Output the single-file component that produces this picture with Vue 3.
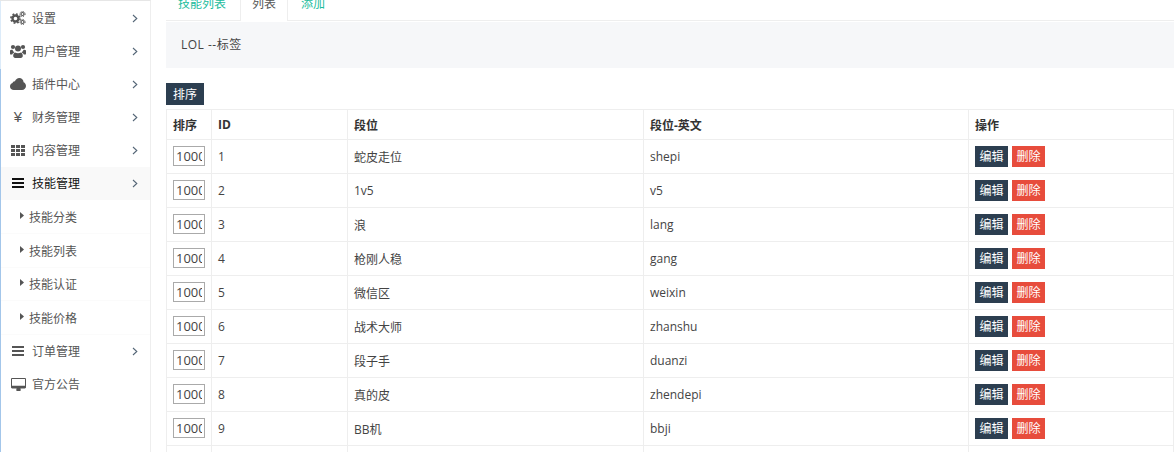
<script setup>
const menu = [
  { label: '设置', icon: 'cogs', arrow: true },
  { label: '用户管理', icon: 'users', arrow: true },
  { label: '插件中心', icon: 'cloud', arrow: true },
  { label: '财务管理', icon: 'yen', arrow: true },
  { label: '内容管理', icon: 'th', arrow: true },
  { label: '技能管理', icon: 'bars', arrow: true, active: true },
]
const subs = ['技能分类', '技能列表', '技能认证', '技能价格']
const rows = [
  [1, '蛇皮走位', 'shepi'], [2, '1v5', 'v5'], [3, '浪', 'lang'],
  [4, '枪刚人稳', 'gang'], [5, '微信区', 'weixin'], [6, '战术大师', 'zhanshu'],
  [7, '段子手', 'duanzi'], [8, '真的皮', 'zhendepi'], [9, 'BB机', 'bbji'],
]
</script>

<template>
  <div class="page">
    <aside class="side">
      <div v-for="m in menu" :key="m.label" class="item" :class="{ active: m.active }">
        <span class="ico">
          <svg v-if="m.icon === 'cogs'" width="16" height="14" viewBox="0 0 16 14"><g fill="none" stroke="currentColor"><circle cx="5.500" cy="7.500" r="3" stroke-width="2.400"/><circle cx="5.500" cy="7.500" r="4.600" stroke-width="1.600" stroke-dasharray="1.800 1.800"/><circle cx="12.500" cy="3" r="1.500" stroke-width="1.200"/><circle cx="12.500" cy="3" r="2.600" stroke-width="1" stroke-dasharray="1.200 1.200"/><circle cx="12.500" cy="11" r="1.500" stroke-width="1.200"/><circle cx="12.500" cy="11" r="2.600" stroke-width="1" stroke-dasharray="1.200 1.200"/></g></svg>
          <svg v-else-if="m.icon === 'users'" width="16" height="14" viewBox="0 0 16 14" fill="currentColor"><circle cx="3" cy="3" r="2.100"/><circle cx="13" cy="3" r="2.100"/><circle cx="8" cy="4.600" r="3"/><path d="M0 6.600C.4 5.800 1.400 5.600 2.400 5.800c.6 1.200 1 2 1.900 2.600C3 8.900 2.400 9.800 2.200 10.500H.8C.2 10.500 0 10 0 9.500zM16 6.600c-.4-.8-1.400-1-2.400-.8-.6 1.200-1 2-1.900 2.600 1.300.5 1.900 1.400 2.100 2.100h1.400c.6 0 .8-.5.800-1z"/><path d="M5 8.400c1.800 1.100 4.200 1.100 6 0 1.200.4 1.800 1.600 1.800 3.400 0 1.300-.8 2.200-2 2.200H5.200c-1.200 0-2-.9-2-2.200 0-1.800.6-3 1.800-3.400z"/></svg>
          <svg v-else-if="m.icon === 'cloud'" width="16" height="12" viewBox="0 0 16 12" fill="currentColor"><path d="M3.800 12C1.700 12 0 10.500 0 8.500 0 6.900 1 5.600 2.500 5.100 2.700 3.900 3.700 3.100 4.900 3.200 5.700 1.300 7.400 0 9.300 0c2.400 0 4.200 1.800 4.300 4.300C15 4.900 16 6.300 16 8c0 2.300-1.800 4-4 4z"/></svg>
          <span v-else-if="m.icon === 'yen'" class="yen">¥</span>
          <svg v-else-if="m.icon === 'th'" width="14" height="11" viewBox="0 0 14 11" fill="currentColor"><rect x="0" y="0" width="4" height="3"/><rect x="5" y="0" width="4" height="3"/><rect x="10" y="0" width="4" height="3"/><rect x="0" y="4" width="4" height="3"/><rect x="5" y="4" width="4" height="3"/><rect x="10" y="4" width="4" height="3"/><rect x="0" y="8" width="4" height="3"/><rect x="5" y="8" width="4" height="3"/><rect x="10" y="8" width="4" height="3"/></svg>
          <svg v-else width="12" height="10" viewBox="0 0 12 10" fill="currentColor"><rect width="12" height="2"/><rect y="4" width="12" height="2"/><rect y="8" width="12" height="2"/></svg>
        </span>
        <span class="lbl">{{ m.label }}</span>
        <svg class="chev" width="6" height="9" viewBox="0 0 6 9"><path d="M1 1l3.800 3.500L1 8" fill="none" stroke="currentColor" stroke-width="1.100"/></svg>
      </div>
      <div v-for="s in subs" :key="s" class="sub">
        <svg class="caret" width="4" height="7" viewBox="0 0 4 7"><path d="M0 0l4 3.500L0 7z" fill="currentColor"/></svg>
        <span>{{ s }}</span>
      </div>
      <div class="item">
        <span class="ico"><svg width="12" height="10" viewBox="0 0 12 10" fill="currentColor"><rect width="12" height="2"/><rect y="4" width="12" height="2"/><rect y="8" width="12" height="2"/></svg></span>
        <span class="lbl">订单管理</span>
        <svg class="chev" width="6" height="9" viewBox="0 0 6 9"><path d="M1 1l3.800 3.500L1 8" fill="none" stroke="currentColor" stroke-width="1.100"/></svg>
      </div>
      <div class="item">
        <span class="ico"><svg width="15" height="13" viewBox="0 0 15 13" fill="currentColor"><path d="M1.200 0h12.600c.7 0 1.200.5 1.200 1.200v8.100c0 .7-.5 1.200-1.200 1.200H9.400c0 .7.400 1.100.400 1.600 0 .4-.2.900-.6.900H5.800c-.4 0-.6-.5-.6-.9 0-.5.400-.9.400-1.600H1.200C.5 10.500 0 10 0 9.300V1.200C0 .5.500 0 1.200 0zM1 1v6.800h13V1z" fill-rule="evenodd"/></svg></span>
        <span class="lbl">官方公告</span>
      </div>
    </aside>

    <main class="main">
      <nav class="tabs">
        <a class="tab">技能列表</a>
        <a class="tab cur">列表</a>
        <a class="tab">添加</a>
      </nav>
      <div class="title">LOL --标签</div>
      <div class="tools"><button class="btn dark">排序</button></div>
      <table class="tbl">
        <colgroup><col style="width:45px"><col style="width:136px"><col style="width:296px"><col style="width:325px"><col></colgroup>
        <thead>
          <tr><th>排序</th><th>ID</th><th>段位</th><th>段位-英文</th><th>操作</th></tr>
        </thead>
        <tbody>
          <tr v-for="r in rows" :key="r[0]">
            <td><input class="ord" value="1000" /></td>
            <td>{{ r[0] }}</td>
            <td>{{ r[1] }}</td>
            <td>{{ r[2] }}</td>
            <td class="ops"><button class="btn dark">编辑</button><button class="btn red">删除</button></td>
          </tr>
          <tr class="last"><td></td><td></td><td></td><td></td><td></td></tr>
        </tbody>
      </table>
    </main>
  </div>
</template>

<style>
html, body { margin: 0; background: #fff; overflow: hidden; }
</style>

<style scoped>
.page {
  display: flex;
  width: 1174px;
  height: 452px;
  overflow: hidden;
  font-family: "Open Sans", "Noto Sans CJK SC", sans-serif;
  font-size: 12px;
  color: #555;
}
.side {
  width: 151px;
  height: 452px;
  flex: none;
  box-sizing: border-box;
  padding: 1px 0 0 1px;
  border-top: 1px solid #e6e6e6;
  border-right: 1px solid #eee;
  margin-right: 15px;
  background: linear-gradient(#dcebf9 0 68px, #a3c6ea 68px) left top / 1px 100% no-repeat;
}
.item {
  display: flex;
  align-items: center;
  height: 33px;
  box-sizing: border-box;
  padding-bottom: 1px;
  color: #555;
}
.item.active { background: #f9f9f9; color: #111; }
.ico {
  width: 16px;
  margin-left: 9px;
  margin-right: 6px;
  display: flex;
  justify-content: center;
  align-items: center;
}
.yen { font-family: "Liberation Sans", sans-serif; font-size: 15px; line-height: 14px; }
.lbl { flex: 1; }
.chev { margin-right: 12px; color: #567; }
.sub {
  display: flex;
  align-items: center;
  height: 33.800px;
  padding-left: 19px;
  padding-top: 1px;
  border-bottom: 1px solid #fbfbfb;
  box-sizing: border-box;
  color: #555;
}
.caret { margin-right: 5px; margin-top: -3px; color: #555; }
.main { flex: 1; min-width: 0; }
.tabs {
  display: flex;
  height: 20px;
  border-bottom: 1px solid #eee;
}
.tab {
  display: block;
  height: 21px;
  box-sizing: border-box;
  padding: 0 12px;
  line-height: 7px;
  color: #1abc9c;
}
.tab.cur {
  margin-left: 2px;
  margin-right: 1px;
  padding: 0 11px;
  color: #555;
  background: #fff;
  border-left: 1px solid #eee;
  border-right: 1px solid #eee;
}
.title {
  height: 46px;
  margin-top: 1px;
  line-height: 46px;
  padding-left: 15px;
  background: #f6f7f9;
  color: #444;
  letter-spacing: .5px;
}
.tools { margin-top: 15px; height: 26px; }
.btn {
  display: inline-block;
  height: 21px;
  width: 33px;
  padding: 0;
  border: 0;
  border-radius: 0;
  font: inherit;
  line-height: 21px;
  text-align: center;
  color: #fff;
  vertical-align: top;
}
.btn.dark { background: #2c3e50; }
.tools .btn { width: 38px; height: 22px; }
.btn.red { background: #e74c3c; margin-left: 4px; }
.tbl {
  width: 1008px;
  table-layout: fixed;
  border-collapse: collapse;
}
.tbl th, .tbl td {
  border: 1px solid #eee;
  padding: 0 6px;
  text-align: left;
  color: #444;
  font-size: 12px;
  box-sizing: border-box;
}
.tbl th { height: 30px; color: #333; font-weight: 700; }
.tbl td { height: 34px; }
.ord {
  display: block;
  width: 32px;
  height: 20px;
  margin-bottom: 2px;
  box-sizing: border-box;
  padding: 0 2px;
  border: 1px solid #aaa;
  font: inherit;
  font-size: 13px;
  color: #444;
  outline: none;
  border-radius: 0;
}
</style>
